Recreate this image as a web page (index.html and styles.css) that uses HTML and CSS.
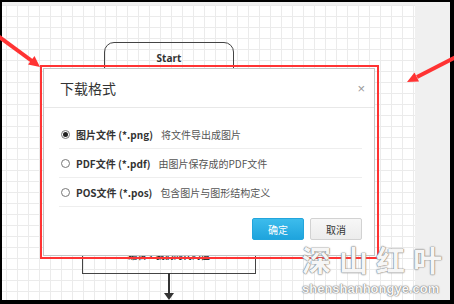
FILE: index.html
```html
<!DOCTYPE html>
<html lang="zh-CN">
<head>
	<meta charset="UTF-8">
	<title>下载格式</title>
	<link rel="stylesheet" href="styles.css">
</head>
<body>
<div class="screen">
	<div class="canvas">
		<div class="node start">Start</div>
		<div class="node step"><span>编辑 1 我们的代码值</span></div>
		<div class="link"></div>
	</div>
	<div class="side"></div>
</div>

<div class="highlight">
	<div class="dialog">
		<div class="dialog-head">
			<h3>下载格式</h3>
			<span class="close">×</span>
		</div>
		<ul class="formats">
			<li><span class="radio on"></span><b>图片文件 (*.png)</b><em>将文件导出成图片</em></li>
			<li><span class="radio"></span><b>PDF文件 (*.pdf)</b><em>由图片保存成的PDF文件</em></li>
			<li><span class="radio"></span><b>POS文件 (*.pos)</b><em>包含图片与图形结构定义</em></li>
		</ul>
		<div class="dialog-foot">
			<button class="btn ok">确定</button>
			<button class="btn">取消</button>
		</div>
	</div>
</div>

<svg class="marks" width="454" height="304" viewBox="0 0 454 304">
	<line x1="-2" y1="36" x2="32" y2="61" stroke="#f33" stroke-width="4"/>
	<polygon points="40,67 28,64.5 34.5,56" fill="#f33"/>
	<line x1="456" y1="57" x2="417" y2="77" stroke="#f33" stroke-width="4"/>
	<polygon points="407,82 419,81.5 414.5,72.5" fill="#f33"/>
</svg>

<div class="watermark">
	<div class="wm-cn">深山红叶</div>
	<div class="wm-en">shenshanhongye.com</div>
</div>
</body>
</html>
```

FILE: styles.css
```css
* {
	margin: 0;
	padding: 0;
	list-style: none;
	box-sizing: border-box;
}
body {
	width: 454px;
	height: 304px;
	background: #000;
	overflow: hidden;
	position: relative;
	font-family: "Noto Sans CJK SC", "Liberation Sans", sans-serif;
}
.screen {
	display: flex;
	height: 298px;
	margin: 2px 4px 0 2px;
	padding-top: 3px;
	background: #f0f0f0;
}
.canvas {
	width: 413px;
	position: relative;
	background-color: #fff;
	background-image: linear-gradient(to right, #ebebeb 1px, transparent 1px),
		linear-gradient(to bottom, #ebebeb 1px, transparent 1px);
	background-size: 11px 11px;
	background-position: 4px 0;
}
.side {
	flex: 1;
}
.node {
	position: absolute;
	border: 1.5px solid #444;
	color: #333;
	font-weight: bold;
	font-size: 9px;
	text-align: center;
}
.start {
	left: 102px;
	top: 37px;
	width: 130px;
	height: 44px;
	border-radius: 10px;
	padding-top: 8px;
	font-size: 10px;
	font-family: "Open Sans", "Noto Sans CJK SC", sans-serif;
}
.step {
	left: 80px;
	top: 228px;
	width: 174px;
	height: 41px;
	display: flex;
	flex-direction: column;
	justify-content: flex-end;
	padding-bottom: 11px;
}
.link {
	position: absolute;
	left: 166px;
	top: 268px;
	width: 2px;
	height: 22px;
	background: #333;
}
.link:after {
	content: "";
	position: absolute;
	left: -4px;
	bottom: -5px;
	border-left: 5px solid transparent;
	border-right: 5px solid transparent;
	border-top: 7px solid #333;
}

.highlight {
	position: absolute;
	left: 40px;
	top: 65px;
	width: 339px;
	height: 194px;
	border: 2px solid #f33;
	padding: 1px;
}
.dialog {
	width: 332px;
	height: 188px;
	background: #fff;
	border: 1px solid #c4c4c4;
	display: flex;
	flex-direction: column;
}
.dialog-head {
	height: 39px;
	display: flex;
	align-items: center;
	justify-content: space-between;
	padding: 0 9px 0 16px;
	border-bottom: 1px solid #e8e8e8;
}
.dialog-head h3 {
	font-size: 14px;
	font-weight: normal;
	color: #333;
}
.close {
	font-size: 13px;
	color: #999;
	font-family: "Liberation Sans", sans-serif;
}
.formats {
	padding: 12px 12px 0 15px;
}
.formats li {
	height: 29px;
	display: flex;
	align-items: center;
	padding-left: 2px;
	border-bottom: 1px solid #eee;
	font-size: 10px;
}
.radio {
	width: 9px;
	height: 9px;
	border: 1px solid #777;
	border-radius: 50%;
	margin-right: 6px;
	display: flex;
	align-items: center;
	justify-content: center;
}
.radio.on:after {
	content: "";
	width: 5px;
	height: 5px;
	border-radius: 50%;
	background: #222;
}
.formats b {
	color: #333;
	margin-right: 8px;
}
.formats em {
	font-style: normal;
	color: #555;
}
.dialog-foot {
	display: flex;
	justify-content: flex-end;
	gap: 6px;
	padding: 11px 12px 0 0;
}
.btn {
	width: 52px;
	height: 22px;
	border: 1px solid #d2d2d2;
	border-radius: 2px;
	background: linear-gradient(#f7f7f7, #ececec);
	color: #333;
	font-size: 10px;
	font-family: "Noto Sans CJK SC", sans-serif;
}
.btn.ok {
	border-color: #22a5dc;
	background: linear-gradient(#3dbcec, #1fa4dd);
	color: #fff;
}

.marks {
	position: absolute;
	left: 0;
	top: 0;
}
.watermark {
	position: absolute;
	left: 302px;
	top: 244px;
	color: rgba(255, 255, 255, 0.95);
	text-shadow: 0 0 1px #777, 0 0 1px #777, 0 0 2px #aaa;
}
.wm-cn {
	font-size: 29px;
	line-height: 30px;
	letter-spacing: 8px;
	font-weight: bold;
}
.wm-en {
	font-family: "Liberation Sans", sans-serif;
	font-weight: bold;
	font-size: 13px;
	line-height: 14px;
	margin-top: 8px;
}
```
